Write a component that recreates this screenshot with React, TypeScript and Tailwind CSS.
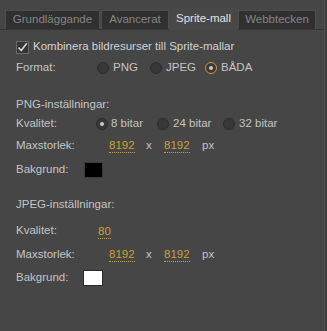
import React from "react";

const font = { fontFamily: '"Liberation Sans", Arial, sans-serif' };

function Radio({ checked, accent }: { checked?: boolean; accent?: boolean }) {
  return (
    <span
      className={
        "relative inline-flex items-center justify-center w-[12px] h-[12px] rounded-full border " +
        (accent
          ? "border-[#d69a2a] bg-[#3a3a3a]"
          : "border-[#2c2c2c] bg-[#383838]")
      }
    >
      {checked && <span className="w-[4px] h-[4px] rounded-full bg-[#c9c9c9]" />}
    </span>
  );
}

function Val({ children }: { children: React.ReactNode }) {
  return (
    <span className="text-[#c9a237] border-b border-dotted border-[#c9a237] leading-[14px] inline-block">
      {children}
    </span>
  );
}

export default function App() {
  return (
    <div
      className="w-[327px] h-[331px] bg-[#3f3f3f] text-[11.5px] text-[#c4c4c4] overflow-hidden"
      style={font}
    >
      <div className="w-[325px] h-[331px] bg-[#464646] border-r border-[#4e4e4e] flex flex-col">
        {/* tabs */}
        <div className="flex items-end pl-[5px] pt-[8px] h-[30px] border-b border-[#353535]">
          <div className="w-[95px] h-[19px] flex items-center justify-center bg-[#303030] border border-[#4d4d4d] border-b-0 text-[#858585]">
            Grundläggande
          </div>
          <div className="w-[68px] h-[19px] ml-[1px] flex items-center justify-center bg-[#303030] border border-[#4d4d4d] border-b-0 text-[#858585]">
            Avancerat
          </div>
          <div className="w-[69px] h-[22px] flex items-center justify-center bg-[#484848] text-[#e2e2e2] mb-[-1px]">
            Sprite-mall
          </div>
          <div className="w-[78px] h-[19px] flex items-center justify-center bg-[#303030] border border-[#4d4d4d] border-b-0 text-[#858585]">
            Webbtecken
          </div>
        </div>

        <div className="pl-[16px] flex flex-col">
          <div className="flex items-center h-[16px] mt-[9px] gap-[4px]">
            <span className="w-[13px] h-[13px] bg-[#363636] border border-[#6a6a6a] flex items-center justify-center">
              <svg width="11" height="11" viewBox="0 0 11 11">
                <path d="M1.5 5.5 L4.2 8.5 L9.8 1.2" fill="none" stroke="#d8d8d8" strokeWidth="1.6" />
              </svg>
            </span>
            <span className="text-[#d2d2d2]">Kombinera bildresurser till Sprite-mallar</span>
          </div>

          <div className="flex items-center h-[16px] mt-[5px]">
            <span className="w-[81px]">Format:</span>
            <span className="flex items-center gap-[4px] w-[53px]"><Radio />PNG</span>
            <span className="flex items-center gap-[4px] w-[55px]"><Radio />JPEG</span>
            <span className="flex items-center gap-[4px]"><Radio checked accent />BÅDA</span>
          </div>

          <div className="h-[16px] mt-[21px] flex items-center">PNG-inställningar:</div>

          <div className="flex items-center h-[16px] mt-[3px]">
            <span className="w-[80px]">Kvalitet:</span>
            <span className="flex items-center gap-[3px] w-[61px]"><Radio checked />8 bitar</span>
            <span className="flex items-center gap-[4px] w-[66px]"><Radio />24 bitar</span>
            <span className="flex items-center gap-[4px]"><Radio />32 bitar</span>
          </div>

          <div className="flex items-center h-[16px] mt-[6px]">
            <span className="w-[93px]">Maxstorlek:</span>
            <span className="w-[37px]"><Val>8192</Val></span>
            <span className="w-[18px]">x</span>
            <span className="w-[38px]"><Val>8192</Val></span>
            <span>px</span>
          </div>

          <div className="flex items-center h-[18px] mt-[7px]">
            <span className="w-[68px]">Bakgrund:</span>
            <span className="w-[19px] h-[16px] bg-black border border-[#3a3a3a]" />
          </div>

          <div className="h-[16px] mt-[18px] flex items-center">JPEG-inställningar:</div>

          <div className="flex items-center h-[16px] mt-[10px]">
            <span className="w-[82px]">Kvalitet:</span>
            <Val>80</Val>
          </div>

          <div className="flex items-center h-[16px] mt-[8px]">
            <span className="w-[93px]">Maxstorlek:</span>
            <span className="w-[37px]"><Val>8192</Val></span>
            <span className="w-[18px]">x</span>
            <span className="w-[38px]"><Val>8192</Val></span>
            <span>px</span>
          </div>

          <div className="flex items-center h-[18px] mt-[6px]">
            <span className="w-[67px]">Bakgrund:</span>
            <span className="w-[20px] h-[16px] bg-white border border-[#2a2a2a]" />
          </div>
        </div>
      </div>
    </div>
  );
}
